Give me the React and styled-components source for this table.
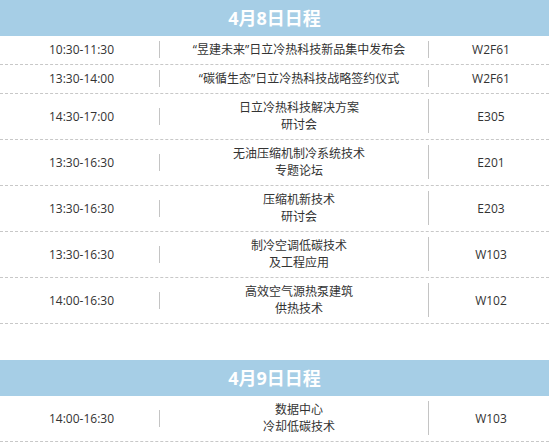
import React from "react";
import styled, { createGlobalStyle } from "styled-components";

const Global = createGlobalStyle`
  html, body { margin: 0; padding: 0; background: #ffffff; }
  body { font-family: "Open Sans", "Noto Sans CJK SC", sans-serif; color: #333333; }
`;

const Page = styled.div`
  width: 549px;
  display: flex;
  flex-direction: column;
  gap: 36px;
`;

const Section = styled.section`
  display: flex;
  flex-direction: column;
`;

const DayHeader = styled.h2`
  margin: 0;
  height: 36px;
  background: #a6cee6;
  color: #ffffff;
  font-size: 18px;
  font-weight: 700;
  line-height: 36px;
  text-align: center;
`;

const Row = styled.div`
  display: flex;
  align-items: center;
  padding: 5px 0 6px;
  border-bottom: 1px dashed #c8c8c8;
  font-size: 12px;
  line-height: 17px;
`;

const Cell = styled.div`
  box-sizing: border-box;
  text-align: center;
  white-space: pre-line;
  width: ${(p) => p.$w}px;
  padding-left: ${(p) => p.$pl || 0}px;
  border-right: ${(p) => (p.$sep ? "1px solid #c4c4c4" : "none")};
`;

const days = [
  {
    title: "4月8日日程",
    rows: [
      ["10:30-11:30", "“昱建未来”日立冷热科技新品集中发布会", "W2F61"],
      ["13:30-14:00", "“碳循生态”日立冷热科技战略签约仪式", "W2F61"],
      ["14:30-17:00", "日立冷热科技解决方案\n研讨会", "E305"],
      ["13:30-16:30", "无油压缩机制冷系统技术\n专题论坛", "E201"],
      ["13:30-16:30", "压缩机新技术\n研讨会", "E203"],
      ["13:30-16:30", "制冷空调低碳技术\n及工程应用", "W103"],
      ["14:00-16:30", "高效空气源热泵建筑\n供热技术", "W102"],
    ],
  },
  {
    title: "4月9日日程",
    rows: [["14:00-16:30", "数据中心\n冷却低碳技术", "W103"]],
  },
];

export default function App() {
  return (
    <>
      <Global />
      <Page>
        {days.map((d) => (
          <Section key={d.title}>
            <DayHeader>{d.title}</DayHeader>
            {d.rows.map((r, i) => (
              <Row key={i}>
                <Cell $w={160} $pl={4} $sep>{r[0]}</Cell>
                <Cell $w={269} $pl={10} $sep>{r[1]}</Cell>
                <Cell $w={120} $pl={4}>{r[2]}</Cell>
              </Row>
            ))}
          </Section>
        ))}
      </Page>
    </>
  );
}
